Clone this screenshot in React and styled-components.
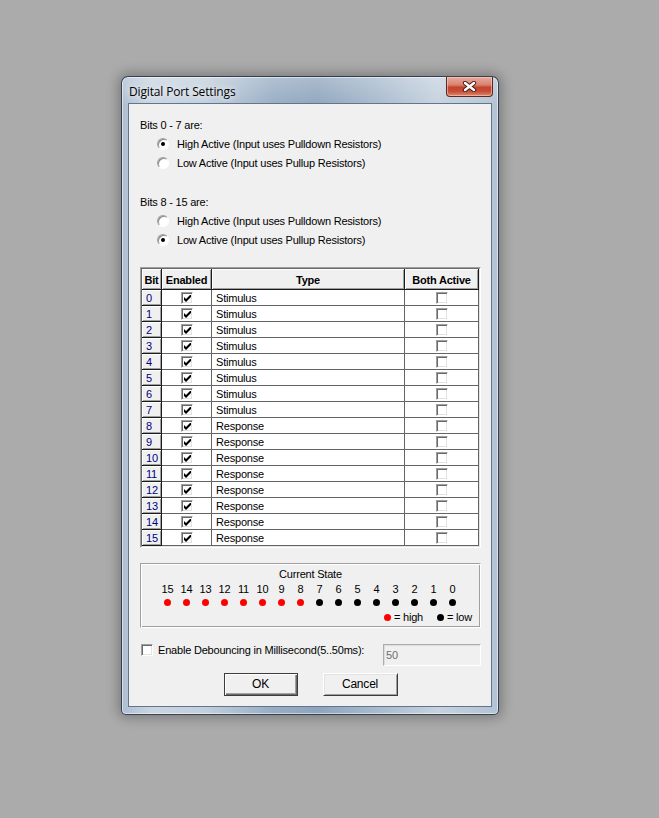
import styled, { createGlobalStyle } from "styled-components";

const GlobalStyle = createGlobalStyle`
  html, body {
    margin: 0;
    background: #ababab;
  }
  body {
    width: 659px;
    height: 818px;
    overflow: hidden;
    font-family: "Liberation Sans", Arial, sans-serif;
    font-size: 11px;
    letter-spacing: -0.2px;
    color: #000;
  }
`;

const rows = [
  "Stimulus", "Stimulus", "Stimulus", "Stimulus",
  "Stimulus", "Stimulus", "Stimulus", "Stimulus",
  "Response", "Response", "Response", "Response",
  "Response", "Response", "Response", "Response",
];

const states = [15, 14, 13, 12, 11, 10, 9, 8, 7, 6, 5, 4, 3, 2, 1, 0];

const CheckMark = () => (
  <svg width="7" height="7" viewBox="0 0 7 7">
    <path d="M0 2 L2 4 L7 -1 L7 2 L2 7 L0 5 Z" fill="#000" />
  </svg>
);

const CloseGlyph = () => (
  <svg width="15" height="11" viewBox="0 0 15 11">
    <path d="M3 2 L12 9 M12 2 L3 9" stroke="#4a1f18" strokeWidth="4.4" strokeLinecap="round" />
    <path d="M3 2 L12 9 M12 2 L3 9" stroke="#fff" strokeWidth="2.4" strokeLinecap="round" />
  </svg>
);

const RadioRow = ({ checked, children }) => (
  <Option>
    <Radio $checked={checked} />
    <span>{children}</span>
  </Option>
);

export default function App() {
  return (
    <Page>
      <GlobalStyle />
      <Window>
        <TitleBar>
          <Title>Digital Port Settings</Title>
          <CloseButton>
            <CloseGlyph />
          </CloseButton>
        </TitleBar>
        <Client>
          <Group>
            <Label>Bits 0 - 7 are:</Label>
            <RadioRow checked>High Active (Input uses Pulldown Resistors)</RadioRow>
            <RadioRow>Low Active (Input uses Pullup Resistors)</RadioRow>
          </Group>
          <Group $top={21}>
            <Label>Bits 8 - 15 are:</Label>
            <RadioRow>High Active (Input uses Pulldown Resistors)</RadioRow>
            <RadioRow checked>Low Active (Input uses Pullup Resistors)</RadioRow>
          </Group>

          <TableFrame>
            <Grid>
              <HeadCell>Bit</HeadCell>
              <HeadCell>Enabled</HeadCell>
              <HeadCell>Type</HeadCell>
              <HeadCell>Both Active</HeadCell>
              {rows.map((type, i) => (
                <Row key={i}>
                  <BitCell>{i}</BitCell>
                  <Cell $center>
                    <Check>
                      <CheckMark />
                    </Check>
                  </Cell>
                  <Cell>{type}</Cell>
                  <Cell $center>
                    <Check />
                  </Cell>
                </Row>
              ))}
            </Grid>
          </TableFrame>

          <StateBox>
            <StateTitle>Current State</StateTitle>
            <StateGrid>
              {states.map((n) => (
                <StateNum key={n}>{n}</StateNum>
              ))}
            </StateGrid>
            <StateGrid>
              {states.map((n) => (
                <DotSlot key={n}>
                  <Dot $high={n >= 8} />
                </DotSlot>
              ))}
            </StateGrid>
            <Legend>
              <LegendItem>
                <Dot $high /> = high
              </LegendItem>
              <LegendItem>
                <Dot /> = low
              </LegendItem>
            </Legend>
          </StateBox>

          <DebounceRow>
            <Check />
            <DebounceLabel>Enable Debouncing in Millisecond(5..50ms):</DebounceLabel>
            <Field>50</Field>
          </DebounceRow>

          <Buttons>
            <Button $default>OK</Button>
            <Button>Cancel</Button>
          </Buttons>
        </Client>
      </Window>
    </Page>
  );
}

const Page = styled.div`
  padding: 76px 0 0 121px;
`;

const Window = styled.div`
  box-sizing: border-box;
  width: 378px;
  height: 639px;
  display: flex;
  flex-direction: column;
  padding: 0 6px 7px 6px;
  border: 1px solid rgba(38, 50, 66, 0.9);
  border-radius: 7px 7px 5px 5px;
  background:
    linear-gradient(180deg, rgba(255, 255, 255, 0.25) 0px, rgba(255, 255, 255, 0) 30px),
    linear-gradient(
      90deg,
      #aebfd2 0%,
      #c9d5e1 8%,
      #c2cfdc 22%,
      #98adc3 40%,
      #8fa5bd 52%,
      #a8bacd 68%,
      #c6d2de 84%,
      #b2c3d4 100%
    );
  box-shadow: 0 0 12px 3px rgba(0, 0, 0, 0.28), inset 0 0 0 1px rgba(255, 255, 255, 0.5);
`;

const TitleBar = styled.div`
  height: 26px;
  display: flex;
  align-items: flex-start;
`;

const Title = styled.div`
  margin: 7px 0 0 1px;
  font-family: "Open Sans", "Noto Sans", sans-serif;
  font-size: 12px;
  letter-spacing: -0.15px;
  line-height: 16px;
  color: #000;
  text-shadow: 0 0 6px rgba(255, 255, 255, 0.9), 0 0 10px rgba(255, 255, 255, 0.7);
`;

const CloseButton = styled.div`
  box-sizing: border-box;
  margin: 0 -1px 0 auto;
  width: 47px;
  height: 20px;
  display: flex;
  align-items: center;
  justify-content: center;
  border: 1px solid #5b2a22;
  border-top: none;
  border-radius: 0 0 4px 4px;
  background: linear-gradient(180deg, #e9a99b 0%, #d98573 40%, #c4432f 55%, #c84c36 75%, #dd8a6c 100%);
  box-shadow: inset 0 0 0 1px rgba(255, 220, 210, 0.5);
`;

const Client = styled.div`
  flex: 1;
  display: flex;
  flex-direction: column;
  background: #f0f0f0;
  border: 1px solid #62758c;
  padding: 12px 10px 0 11px;
`;

const Group = styled.div`
  margin-top: ${(p) => p.$top || 0}px;
  display: flex;
  flex-direction: column;
`;

const Label = styled.div`
  height: 18px;
  line-height: 18px;
`;

const Option = styled.div`
  height: 19px;
  display: flex;
  align-items: center;
  gap: 8px;
  padding-left: 17px;
`;

const Radio = styled.span`
  box-sizing: border-box;
  width: 12px;
  height: 12px;
  border-radius: 50%;
  background: #fff;
  border: 1px solid;
  border-color: #a0a0a0 #fff #fff #a0a0a0;
  box-shadow: inset 1px 1px 0 #8a8a8a;
  display: flex;
  align-items: center;
  justify-content: center;
  &::after {
    content: "";
    width: 4px;
    height: 4px;
    border-radius: 50%;
    background: #000;
    display: ${(p) => (p.$checked ? "block" : "none")};
  }
`;

const TableFrame = styled.div`
  margin-top: 18px;
  height: 281px;
  box-sizing: border-box;
  border: 1px solid;
  border-color: #a0a0a0 #fff #fff #a0a0a0;
  background: #f0f0f0;
`;

const Grid = styled.div`
  height: 100%;
  box-sizing: border-box;
  border: 1px solid;
  border-color: #696969 #e3e3e3 #e3e3e3 #696969;
  display: grid;
  grid-template-columns: 20px 50px 193px 74px;
  grid-template-rows: 21px repeat(16, 16px);
  align-content: start;
`;

const Row = styled.div`
  display: contents;
`;

const HeadCell = styled.div`
  box-sizing: border-box;
  display: flex;
  align-items: center;
  justify-content: center;
  padding-top: 1px;
  font-weight: bold;
  background: #f0f0f0;
  border-right: 1px solid #1a1a1a;
  border-bottom: 1px solid #1a1a1a;
  box-shadow: inset 1px 1px 0 #fff, inset -1px -1px 0 #a0a0a0;
  white-space: nowrap;
  overflow: hidden;
`;

const BitCell = styled.div`
  box-sizing: border-box;
  display: flex;
  align-items: center;
  padding-left: 4px;
  color: #000080;
  background: #f0f0f0;
  border-right: 1px solid #1a1a1a;
  border-bottom: 1px solid #1a1a1a;
  box-shadow: inset 1px 1px 0 #fff, inset -1px -1px 0 #a0a0a0;
`;

const Cell = styled.div`
  box-sizing: border-box;
  display: flex;
  align-items: center;
  justify-content: ${(p) => (p.$center ? "center" : "flex-start")};
  padding-left: ${(p) => (p.$center ? 0 : 4)}px;
  background: #fff;
  border-right: 1px solid #646464;
  border-bottom: 1px solid #646464;
`;

const Check = styled.span`
  box-sizing: border-box;
  flex: none;
  width: 12px;
  height: 12px;
  display: flex;
  align-items: center;
  justify-content: center;
  background: #fff;
  border: 1px solid;
  border-color: #a0a0a0 #fff #fff #a0a0a0;
  box-shadow: inset 1px 1px 0 #696969, inset -1px -1px 0 #e3e3e3;
  padding: 1px 0 0 1px;
`;

const StateBox = styled.div`
  margin-top: 15px;
  height: 65px;
  box-sizing: border-box;
  border: 1px solid;
  border-color: #a0a0a0 #fff #fff #a0a0a0;
  box-shadow: inset 1px 1px 0 #fff, inset -1px -1px 0 #a0a0a0;
  display: flex;
  flex-direction: column;
`;

const StateTitle = styled.div`
  margin-top: 3px;
  height: 14px;
  line-height: 14px;
  text-align: center;
`;

const StateGrid = styled.div`
  display: grid;
  grid-template-columns: repeat(16, 19px);
  padding-left: 17px;
`;

const StateNum = styled.div`
  height: 16px;
  line-height: 16px;
  text-align: center;
`;

const DotSlot = styled.div`
  height: 11px;
  display: flex;
  align-items: center;
  justify-content: center;
`;

const Dot = styled.span`
  display: inline-block;
  width: 7px;
  height: 7px;
  border-radius: 50%;
  background: ${(p) => (p.$high ? "#ff0000" : "#000")};
`;

const Legend = styled.div`
  margin-top: 2px;
  display: flex;
  justify-content: flex-end;
  gap: 14px;
  padding-right: 8px;
  height: 15px;
  line-height: 15px;
`;

const LegendItem = styled.div`
  display: flex;
  align-items: center;
  gap: 3px;
`;

const DebounceRow = styled.div`
  margin-top: 16px;
  height: 22px;
  display: flex;
  align-items: flex-start;
  gap: 5px;
  padding-left: 1px;
`;

const DebounceLabel = styled.span`
  line-height: 13px;
`;

const Field = styled.div`
  box-sizing: border-box;
  margin-left: auto;
  align-self: stretch;
  width: 98px;
  padding: 4px 2px;
  color: #6d6d6d;
  border: 1px solid;
  border-color: #adadad #fff #fff #adadad;
  box-shadow: inset 1px 1px 0 #dcdcdc;
`;

const Buttons = styled.div`
  margin-top: 7px;
  display: flex;
  justify-content: center;
  gap: 25px;
`;

const Button = styled.div`
  box-sizing: border-box;
  width: ${(p) => (p.$default ? 74 : 75)}px;
  height: 23px;
  display: flex;
  align-items: center;
  justify-content: center;
  padding-bottom: 1px;
  font-size: 12px;
  background: #f0f0f0;
  border: 1px solid;
  border-color: ${(p) => (p.$default ? "#3c3c3c" : "#fff #3c3c3c #3c3c3c #fff")};
  box-shadow: ${(p) =>
    p.$default
      ? "inset 1px 1px 0 #fff, inset -1px -1px 0 #696969, inset -2px -2px 0 #a0a0a0"
      : "inset 1px 1px 0 #e3e3e3, inset -1px -1px 0 #a0a0a0"};
`;
